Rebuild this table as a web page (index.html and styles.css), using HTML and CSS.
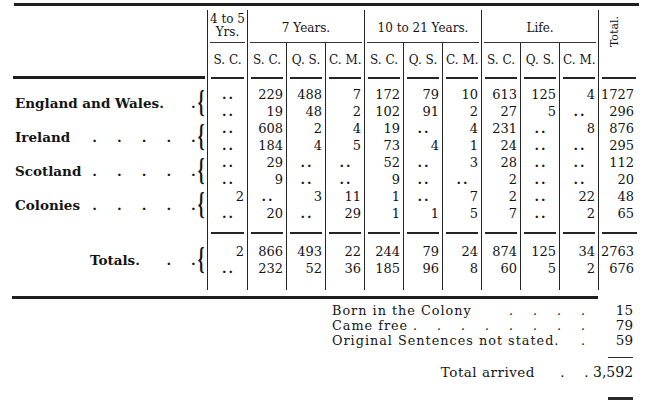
FILE: index.html
```html
<!DOCTYPE html>
<html>
<head>
<meta charset="utf-8">
<link rel="stylesheet" href="styles.css">
</head>
<body>
<div class="page">
  <div class="rule-top"></div>
  <table class="stats">
    <colgroup>
      <col class="c-label"><col class="c40"><col class="c39"><col class="c39"><col class="c39"><col class="c39"><col class="c39"><col class="c39"><col class="c39"><col class="c39"><col class="c39"><col class="c42">
    </colgroup>
    <thead>
      <tr class="h1">
        <th rowspan="2" class="lab-h"><div class="lab-line"></div></th>
        <th><div class="grp two">4 to 5<br>Yrs.</div></th>
        <th colspan="3"><div class="grp">7 Years.</div></th>
        <th colspan="3"><div class="grp">10 to 21 Years.</div></th>
        <th colspan="3"><div class="grp">Life.</div></th>
        <th rowspan="2" class="tot-h"><div class="tot"><span class="rot">Total.</span></div></th>
      </tr>
      <tr class="h2">
        <th><div class="sub">S. C.</div></th>
        <th><div class="sub">S. C.</div></th>
        <th><div class="sub">Q. S.</div></th>
        <th><div class="sub">C. M.</div></th>
        <th><div class="sub">S. C.</div></th>
        <th><div class="sub">Q. S.</div></th>
        <th><div class="sub">C. M.</div></th>
        <th><div class="sub">S. C.</div></th>
        <th><div class="sub">Q. S.</div></th>
        <th><div class="sub">C. M.</div></th>
      </tr>
    </thead>
    <tbody>
      <tr class="gap"><td class="lab"></td><td></td><td></td><td></td><td></td><td></td><td></td><td></td><td></td><td></td><td></td><td></td></tr>

      <tr class="r">
        <td rowspan="2" class="lab"><div class="lab-in"><span class="name">England and Wales.</span><span class="lead"><span class="d">.</span></span><span class="brace">{</span></div></td>
        <td class="z">..</td><td>229</td><td>488</td><td>7</td><td>172</td><td>79</td><td>10</td><td>613</td><td>125</td><td>4</td><td class="t">1727</td>
      </tr>
      <tr class="r">
        <td class="z">..</td><td>19</td><td>48</td><td>2</td><td>102</td><td>91</td><td>2</td><td>27</td><td>5</td><td class="z">..</td><td class="t">296</td>
      </tr>

      <tr class="r">
        <td rowspan="2" class="lab"><div class="lab-in"><span class="name">Ireland</span><span class="lead"><span class="d">.</span><span class="d">.</span><span class="d">.</span><span class="d">.</span><span class="d">.</span></span><span class="brace">{</span></div></td>
        <td class="z">..</td><td>608</td><td>2</td><td>4</td><td>19</td><td class="z">..</td><td>4</td><td>231</td><td class="z">..</td><td>8</td><td class="t">876</td>
      </tr>
      <tr class="r">
        <td class="z">..</td><td>184</td><td>4</td><td>5</td><td>73</td><td>4</td><td>1</td><td>24</td><td class="z">..</td><td class="z">..</td><td class="t">295</td>
      </tr>

      <tr class="r">
        <td rowspan="2" class="lab"><div class="lab-in"><span class="name">Scotland</span><span class="lead"><span class="d">.</span><span class="d">.</span><span class="d">.</span><span class="d">.</span><span class="d">.</span></span><span class="brace">{</span></div></td>
        <td class="z">..</td><td>29</td><td class="z">..</td><td class="z">..</td><td>52</td><td class="z">..</td><td>3</td><td>28</td><td class="z">..</td><td class="z">..</td><td class="t">112</td>
      </tr>
      <tr class="r">
        <td class="z">..</td><td>9</td><td class="z">..</td><td class="z">..</td><td>9</td><td class="z">..</td><td class="z">..</td><td>2</td><td class="z">..</td><td class="z">..</td><td class="t">20</td>
      </tr>

      <tr class="r">
        <td rowspan="2" class="lab"><div class="lab-in"><span class="name">Colonies</span><span class="lead"><span class="d">.</span><span class="d">.</span><span class="d">.</span><span class="d">.</span><span class="d">.</span></span><span class="brace">{</span></div></td>
        <td>2</td><td class="z">..</td><td>3</td><td>11</td><td>1</td><td class="z">..</td><td>7</td><td>2</td><td class="z">..</td><td>22</td><td class="t">48</td>
      </tr>
      <tr class="r">
        <td class="z">..</td><td>20</td><td class="z">..</td><td>29</td><td>1</td><td>1</td><td>5</td><td>7</td><td class="z">..</td><td>2</td><td class="t">65</td>
      </tr>

      <tr class="sep"><td class="lab"></td><td><div class="sl-line"></div></td><td><div class="sl-line"></div></td><td><div class="sl-line"></div></td><td><div class="sl-line"></div></td><td><div class="sl-line"></div></td><td><div class="sl-line"></div></td><td><div class="sl-line"></div></td><td><div class="sl-line"></div></td><td><div class="sl-line"></div></td><td><div class="sl-line"></div></td><td><div class="sl-line"></div></td></tr>

      <tr class="r">
        <td rowspan="2" class="lab"><div class="lab-in totals"><span class="name">Totals.</span><span class="lead"><span class="d">.</span><span class="d">.</span></span><span class="brace">{</span></div></td>
        <td>2</td><td>866</td><td>493</td><td>22</td><td>244</td><td>79</td><td>24</td><td>874</td><td>125</td><td>34</td><td class="t">2763</td>
      </tr>
      <tr class="r">
        <td class="z">..</td><td>232</td><td>52</td><td>36</td><td>185</td><td>96</td><td>8</td><td>60</td><td>5</td><td>2</td><td class="t">676</td>
      </tr>

      <tr class="fill"><td class="lab"></td><td></td><td></td><td></td><td></td><td></td><td></td><td></td><td></td><td></td><td></td><td></td></tr>
    </tbody>
  </table>
  <div class="rule-bot"></div>

  <div class="summary">
    <div class="srow"><span class="sl">Born in the Colony</span><span class="slead"><span class="sd">.</span><span class="sd">.</span><span class="sd">.</span><span class="sd">.</span></span><span class="sn">15</span></div>
    <div class="srow"><span class="sl">Came free</span><span class="slead"><span class="sd">.</span><span class="sd">.</span><span class="sd">.</span><span class="sd">.</span><span class="sd">.</span><span class="sd">.</span><span class="sd">.</span><span class="sd">.</span></span><span class="sn">79</span></div>
    <div class="srow"><span class="sl">Original Sentences not stated.</span><span class="slead"><span class="sd">.</span></span><span class="sn">59</span></div>
    <div class="short"></div>
    <div class="trow"><span class="tl">Total arrived</span><span class="tdot">.</span><span class="tdot">.</span><span class="tn">3,592</span></div>
    <div class="short2"></div>
  </div>
</div>
</body>
</html>
```

FILE: styles.css
```css
html, body {
  margin: 0;
  padding: 0;
  background: #ffffff;
}
body {
  width: 650px;
  height: 410px;
  overflow: hidden;
  font-family: "DejaVu Serif", "Liberation Serif", serif;
  color: #141414;
}
.page {
  padding: 3px 0 0 12px;
}
.rule-top {
  width: 625px;
  height: 3px;
  margin-left: 2px;
  background: #1e1e1e;
}

/* ---------- table ---------- */
.stats {
  border-collapse: separate;
  border-spacing: 0;
  table-layout: fixed;
  width: 628px;
  margin-top: 4px;
}
.c-label { width: 195px; }
.c40 { width: 40px; }
.c39 { width: 39px; }
.c42 { width: 42px; }

.stats th,
.stats td {
  padding: 0;
  border-left: 1px solid #252525;
  box-sizing: border-box;
}
.stats .lab,
.stats .lab-h {
  border-left: none;
}

/* header */
.stats th {
  font-weight: normal;
  font-size: 12px;
  vertical-align: top;
}
.h1 { height: 33px; }
.h2 { height: 36px; }
.grp {
  height: 33px;
  box-sizing: border-box;
  padding-top: 11px;
  line-height: 14px;
  margin: 0 2px;
  border-bottom: 1px solid #333;
  text-align: center;
  white-space: nowrap;
}
.grp.two {
  padding-top: 3px;
  line-height: 13px;
}
.sub {
  height: 36px;
  box-sizing: border-box;
  padding-top: 10px;
  line-height: 14px;
  margin: 0 3px;
  border-bottom: 2px solid #252525;
  text-align: center;
  white-space: nowrap;
}
.lab-h {
  vertical-align: bottom !important;
}
.lab-line {
  margin: 0 2px 0 1px;
  border-bottom: 3px solid #1e1e1e;
}
.tot {
  height: 69px;
  box-sizing: border-box;
  margin: 0 4px 0 3px;
  padding-top: 6px;
  border-bottom: 2px solid #252525;
  text-align: center;
}
.rot {
  display: inline-block;
  writing-mode: vertical-rl;
  transform: rotate(180deg);
  font-size: 11px;
  line-height: 14px;
  margin-right: 8px;
}

/* body rows */
.stats td {
  font-size: 13px;
  line-height: 17px;
  text-align: right;
  padding-right: 3px;
  vertical-align: middle;
  white-space: nowrap;
}
.stats td.t {
  padding-right: 6px;
}
.stats td.z {
  text-align: center;
  padding-right: 0;
  padding-left: 2px;
  letter-spacing: 2px;
  font-weight: bold;
}
.gap { height: 7px; }
.gap td { line-height: 7px; }
.r { height: 17px; }
.sep { height: 21px; }
.sep td {
  vertical-align: top;
  line-height: 0;
  padding-right: 0;
}
.sl-line {
  margin: 10px 3px 0 3px;
  border-top: 2px solid #252525;
}
.fill { height: 13px; }
.fill td { line-height: 13px; }

/* label cells */
.stats td.lab {
  text-align: left;
  padding: 0 3px 0 3px;
  vertical-align: middle;
}
.lab-in {
  display: flex;
  align-items: center;
  height: 34px;
  font-size: 13.5px;
  font-weight: bold;
}
.lab-in.totals {
  padding-left: 75px;
}
.name {
  white-space: nowrap;
}
.lead {
  flex: 1;
  display: flex;
  justify-content: flex-end;
  overflow: hidden;
}
.d {
  margin-left: 20px;
  flex-shrink: 0;
}
.brace {
  font-family: "Liberation Serif", serif;
  font-weight: bold;
  font-size: 31px;
  line-height: 30px;
  display: inline-block;
  transform: scaleX(0.55);
  margin-left: -1px;
  margin-right: -3px;
  position: relative;
  top: -1px;
}

.rule-bot {
  width: 586px;
  height: 3px;
  margin-top: 6px;
  background: #1e1e1e;
}

/* ---------- summary ---------- */
.summary {
  margin-left: 320px;
  width: 301px;
  margin-top: 4px;
  font-size: 12.8px;
  letter-spacing: 1px;
}
.srow {
  display: flex;
  height: 15px;
  line-height: 15px;
  white-space: nowrap;
}
.sl {
  flex-shrink: 0;
}
.slead {
  flex: 1;
  display: flex;
  justify-content: flex-end;
  gap: 18px;
  padding-right: 9px;
}
.sd {
  width: 6px;
  flex-shrink: 0;
  text-align: center;
  letter-spacing: 0;
}
.sn {
  width: 38px;
  text-align: right;
  letter-spacing: 0;
  font-size: 13.5px;
}
.short {
  width: 25px;
  height: 1.5px;
  margin: 8.5px 0 0 auto;
  background: #2a2a2a;
}
.trow {
  display: flex;
  justify-content: flex-end;
  margin-top: 6px;
  height: 16px;
  line-height: 16px;
  white-space: nowrap;
  letter-spacing: 0.5px;
  font-size: 13.5px;
}
.tdot {
  width: 24px;
  text-align: right;
  padding-right: 4px;
  box-sizing: border-box;
}
.tl {
  margin-right: 10px;
}
.tn {
  width: 40px;
  text-align: right;
  letter-spacing: 0;
  font-size: 14px;
}
.short2 {
  width: 25px;
  height: 3px;
  margin: 17px 0 0 auto;
  background: #2a2a2a;
}
```
